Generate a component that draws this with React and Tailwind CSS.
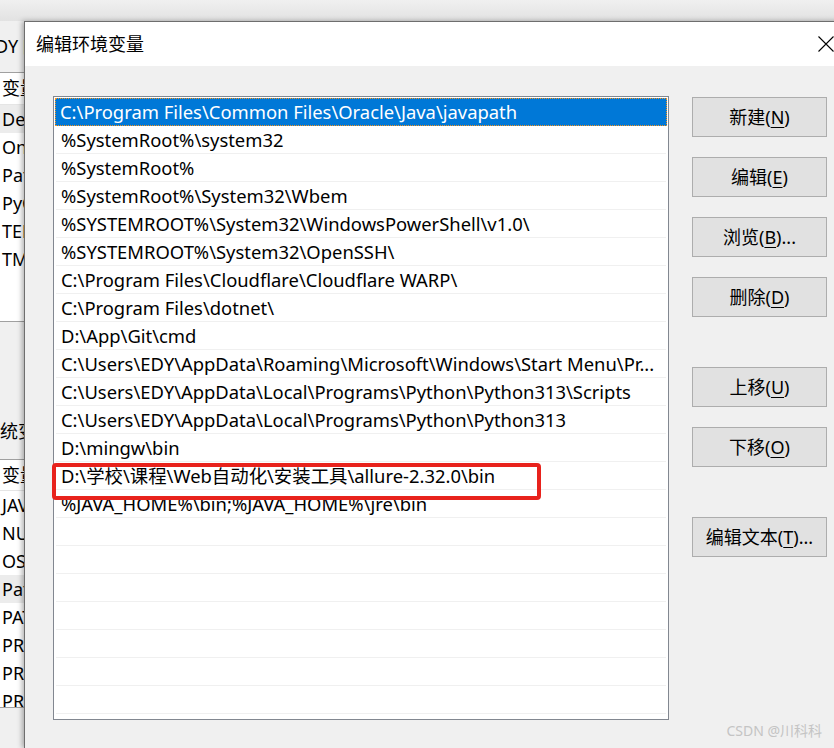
const paths = [
  "C:\\Program Files\\Common Files\\Oracle\\Java\\javapath",
  "%SystemRoot%\\system32",
  "%SystemRoot%",
  "%SystemRoot%\\System32\\Wbem",
  "%SYSTEMROOT%\\System32\\WindowsPowerShell\\v1.0\\",
  "%SYSTEMROOT%\\System32\\OpenSSH\\",
  "C:\\Program Files\\Cloudflare\\Cloudflare WARP\\",
  "C:\\Program Files\\dotnet\\",
  "D:\\App\\Git\\cmd",
  "C:\\Users\\EDY\\AppData\\Roaming\\Microsoft\\Windows\\Start Menu\\Pr...",
  "C:\\Users\\EDY\\AppData\\Local\\Programs\\Python\\Python313\\Scripts",
  "C:\\Users\\EDY\\AppData\\Local\\Programs\\Python\\Python313",
  "D:\\mingw\\bin",
  "D:\\学校\\课程\\Web自动化\\安装工具\\allure-2.32.0\\bin",
  "%JAVA_HOME%\\bin;%JAVA_HOME%\\jre\\bin",
];

const userVars = ["DefaultUserProfile", "OneDrive", "Path", "PyCharm", "TEMP", "TMP"];
const sysVars = [
  "JAVA_HOME",
  "NUMBER_OF_PROCESSORS",
  "OS",
  "Path",
  "PATHEXT",
  "PROCESSOR_ARCHITECTURE",
  "PROCESSOR_IDENTIFIER",
  "PROCESSOR_LEVEL",
];

const Btn = ({ label, k, tail = "" }) => (
  <div className="w-[135px] h-[40px] bg-[#e1e1e1] border border-[#adadad] flex items-center justify-center text-[18px] text-black">
    <span>
      {label}(<span className="underline underline-offset-[3px]">{k}</span>){tail}
    </span>
  </div>
);

const BackWindow = () => (
  <div className="w-[24px] flex-none overflow-hidden flex flex-col text-[18px] text-black whitespace-nowrap">
    <div className="h-[51px] flex-none bg-[#f0f0f0] flex items-center -ml-[5px]">DY 的用户变量(U)</div>
    <div className="h-[250px] flex-none bg-white border-t border-b border-[#a0a0a0] flex flex-col">
      <div className="h-[32px] flex-none flex items-center pl-[2px] border-b border-[#e5e5e5]">变量</div>
      {userVars.map((v, i) => (
        <div
          key={v}
          className={`h-[28px] flex-none flex items-center pl-[2px] ${i === 0 ? "bg-[#ececec]" : ""}`}
        >
          {v}
        </div>
      ))}
    </div>
    <div className="h-[137px] flex-none bg-[#f0f0f0] flex items-end pb-[14px] -ml-[18px]">系统变量(S)</div>
    <div className="h-[249px] flex-none bg-white border-t border-b border-[#a0a0a0] flex flex-col overflow-hidden">
      <div className="h-[31px] flex-none flex items-center pl-[2px] border-b border-[#e5e5e5]">变量</div>
      {sysVars.map((v) => (
        <div
          key={v}
          className={`h-[28px] flex-none flex items-center pl-[2px] ${v === "Path" ? "bg-[#ececec]" : ""}`}
        >
          {v}
        </div>
      ))}
    </div>
    <div className="flex-1 bg-[#f0f0f0]" />
  </div>
);

const Dialog = () => (
  <div className="w-[830px] flex-none flex flex-col border-l border-t border-[#6e6e6e] shadow-[-2px_0_5px_rgba(0,0,0,0.3)] z-10">
    <div className="h-[44px] flex-none bg-white flex items-center pl-[11px] text-[18px] text-black">
      <span>编辑环境变量</span>
      <svg className="ml-auto mr-[20px]" width="16" height="16" viewBox="0 0 16 16">
        <path d="M0.5 0.5 L15.5 15.5 M15.5 0.5 L0.5 15.5" stroke="#000" strokeWidth="1.1" fill="none" />
      </svg>
    </div>
    <div className="flex-1 bg-[#f0f0f0] flex items-start pl-[28px] pt-[30px] gap-[23px]">
      <div className="relative w-[616px] h-[624px] flex-none border border-[#828790] bg-white p-[1px] flex flex-col">
        <div className="flex flex-col overflow-hidden h-full">
          {Array.from({ length: 22 }).map((_, i) => {
            const text = paths[i];
            if (i === 0) {
              return (
                <div
                  key={i}
                  className="h-[28px] flex-none flex items-center pl-[5px] bg-[#0078d7] text-white text-[18.4px] whitespace-nowrap outline-1 outline-dotted outline-[#f7941d] -outline-offset-1"
                >
                  {text}
                </div>
              );
            }
            return (
              <div
                key={i}
                className="h-[28px] flex-none flex items-center pl-[5px] mx-[1px] border-b border-[#f0f0f0] text-black text-[18.4px] whitespace-nowrap"
              >
                {text || ""}
              </div>
            );
          })}
        </div>
        <div className="absolute left-[-2px] top-[366px] w-[489px] h-[37px] border-[4px] border-[#e8221c] rounded-[4px] pointer-events-none" />
      </div>
      <div className="flex flex-col mt-[1px]">
        <Btn label="新建" k="N" />
        <div className="h-[20px]" />
        <Btn label="编辑" k="E" />
        <div className="h-[20px]" />
        <Btn label="浏览" k="B" tail="..." />
        <div className="h-[20px]" />
        <Btn label="删除" k="D" />
        <div className="h-[50px]" />
        <Btn label="上移" k="U" />
        <div className="h-[20px]" />
        <Btn label="下移" k="O" />
        <div className="h-[50px]" />
        <Btn label="编辑文本" k="T" tail="..." />
      </div>
    </div>
  </div>
);

export default function App() {
  return (
    <div className="relative w-[834px] h-[748px] overflow-hidden bg-[#f0f0f0] flex flex-col font-['Noto_Sans','Noto_Sans_CJK_SC',sans-serif]">
      <div className="h-[21px] flex-none bg-gradient-to-b from-[#f0f0f0] to-[#e2e2e2]" />
      <div className="flex flex-1 min-h-0">
        <BackWindow />
        <Dialog />
      </div>
      <div className="absolute right-[12px] bottom-[7px] text-[14px] text-[#c4c4c4] z-20">CSDN @川科科</div>
    </div>
  );
}
